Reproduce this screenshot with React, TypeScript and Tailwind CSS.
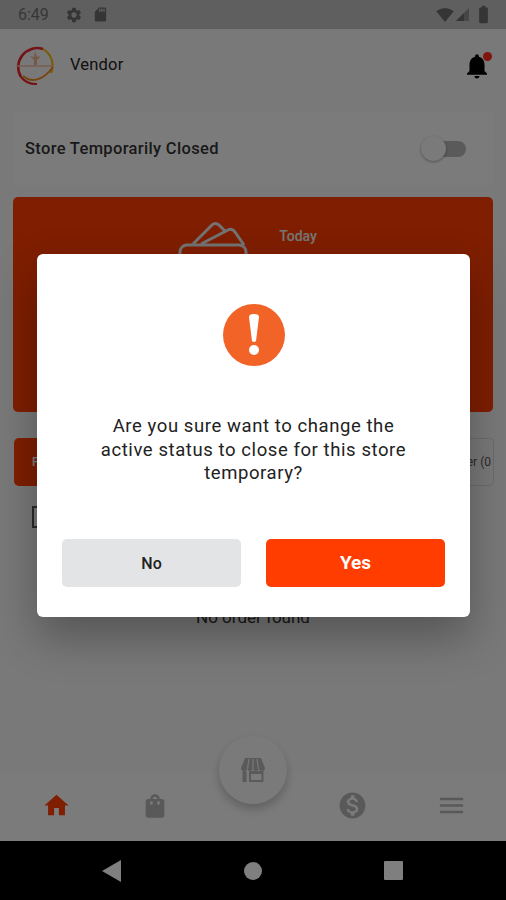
import React from "react";
import { MdHome, MdShoppingBag, MdMonetizationOn, MdMenu, MdNotifications, MdSettings, MdSdStorage, MdSignalWifi4Bar, MdBatteryStd } from "react-icons/md";

const font = { fontFamily: "Roboto, 'Liberation Sans', sans-serif" };

function Logo() {
  return (
    <svg width="44" height="44" viewBox="0 0 44 44" fill="none">
      <path d="M30 6 A19 19 0 0 0 8 34" stroke="#e8262a" strokeWidth="2.5" />
      <path d="M8 34 A19 19 0 0 0 24 41" stroke="#e8262a" strokeWidth="2" />
      <path d="M30 6 A19 19 0 0 1 38 30" stroke="#f0b400" strokeWidth="2" />
      <path d="M10 33 C18 40 30 38 40 24" stroke="#ef8a20" strokeWidth="2" />
      <path d="M3 23 H40" stroke="#f0b8a0" strokeWidth="1.5" />
      <path d="M22 8 l2 6 l4 -1 l-4 4 v5 h-3 v-5 l-4 -4 l4 1 z" fill="#eeb090" />
    </svg>
  );
}

function Wallet() {
  return (
    <svg width="72" height="90" viewBox="0 0 72 90" fill="none" stroke="#e6e6e6" strokeWidth="3" strokeLinejoin="round">
      <path d="M15 23 L34 4 Q37 1 41 4 L47 10" />
      <path d="M23 23 L50 9 Q54 7 57 11 L66 24" />
      <rect x="2" y="24" width="66" height="60" rx="7" />
    </svg>
  );
}

function StoreIcon() {
  return (
    <svg width="26" height="26" viewBox="0 0 26 26" fill="#b4b4b4">
      <path d="M5 1 H21 L25 11 Q25 14 22 14 Q19.5 14 19 12 Q18 14 16 14 Q14 14 13 12 Q12 14 10 14 Q8 14 7 12 Q6.5 14 4 14 Q1 14 1 11 Z" />
      <path d="M9 2 L7.5 12 M13 2 V12 M17 2 L18.5 12" stroke="#f1f1f1" strokeWidth="1.2" />
      <rect x="2.5" y="14" width="4" height="11" />
      <path d="M9 14 H23.5 V25 H9 V14 Z M11 17 V23 H21.5 V17 Z" fillRule="evenodd" />
    </svg>
  );
}

export default function App() {
  return (
    <div className="relative flex h-[900px] w-[506px] flex-col overflow-hidden bg-[#f3f3f3]" style={font}>
      <div className="flex h-[29px] shrink-0 items-center bg-[#bfbfbf] pl-[18px] pr-[12px] text-[#6e6e6e]">
        <span className="text-[16px] leading-none">6:49</span>
        <MdSettings size={18} className="ml-[16px] text-[#6a6a6a]" />
        <MdSdStorage size={17} className="ml-[9px] text-[#6a6a6a]" />
        <div className="ml-auto flex items-center gap-[1px] text-[#6a6a6a]">
          <MdSignalWifi4Bar size={18} />
          <svg width="15" height="15" viewBox="0 0 15 15"><path d="M1 14 L14 1 V14 Z" fill="#8f8f8f" /><path d="M1 14 L9 6 V14 Z" fill="#6a6a6a" /></svg>
          <MdBatteryStd size={21} className="ml-[2px]" />
        </div>
      </div>

      <div className="flex h-[71px] shrink-0 items-center pl-[13px] pr-[14px]">
        <Logo />
        <span className="ml-[13px] pt-[2px] text-[16.5px] tracking-[0.2px] text-[#222]">Vendor</span>
        <div className="relative ml-auto mt-[2px]">
          <MdNotifications size={30} className="text-black" />
          <span className="absolute right-[0px] top-[1px] h-[9px] w-[9px] rounded-full bg-[#ff2a1a]" />
        </div>
      </div>

      <div className="mx-[13px] mt-[12px] flex h-[73px] shrink-0 items-center justify-between rounded-[3px] bg-[#f7f7f7] pl-[12px] pr-[27px]">
        <span className="pt-[2px] text-[16.5px] font-medium tracking-[0.33px] text-[#333]">Store Temporarily Closed</span>
        <div className="relative h-[16px] w-[40px] rounded-full bg-[#b5b5b5]">
          <span className="absolute -left-[5px] -top-[5px] h-[25px] w-[25px] rounded-full bg-[#f5f5f5] shadow-[0_1px_3px_rgba(0,0,0,0.35)]" />
        </div>
      </div>

      <div className="mx-[13px] mt-[12px] flex h-[215px] shrink-0 justify-center gap-[29px] rounded-[5px] bg-[#ff3d00] pr-[11px] pt-[24px]">
        <Wallet />
        <span className="mt-[5px] text-[14px] font-medium text-[#eeeeee]">Today</span>
      </div>

      <div className="ml-[14px] mr-[12px] mt-[26px] flex h-[48px] shrink-0 justify-between gap-3 text-[12px]">
        <div className="flex w-[170px] items-center rounded-[5px] bg-[#ff3d00] pl-[18px] font-medium text-white">Pending</div>
        <div className="flex w-[170px] items-center justify-end overflow-hidden rounded-[4px] border border-[#d8d8d8] pr-[2px] text-[#555]">Delivered order (0</div>
      </div>

      <div className="ml-[32px] mt-[20px] h-[22px] w-[22px] shrink-0 border-2 border-[#555]" />

      <div className="mt-[77px] shrink-0 text-center text-[17px] text-[#333]">No order found</div>

      <div className="flex-1" />

      <nav className="relative grid h-[69px] shrink-0 grid-cols-5 items-center bg-[#f6f6f6] pb-[2px] pl-[7px] pr-[5px] text-[#b3b3b3]">
        <MdHome size={29} className="justify-self-center text-[#ff3d00]" />
        <MdShoppingBag size={28} className="justify-self-center" />
        <span />
        <MdMonetizationOn size={31} className="justify-self-center" />
        <MdMenu size={31} className="justify-self-center" />
        <div className="absolute left-[219px] top-[-36px] flex h-[68px] w-[68px] items-center justify-center rounded-full bg-[#f4f4f4] shadow-[0_5px_10px_rgba(0,0,0,0.22)]">
          <StoreIcon />
        </div>
      </nav>
      <div className="flex h-[59px] shrink-0 items-center bg-black">
        <svg className="ml-[102px]" width="19" height="22" viewBox="0 0 19 22"><path d="M0 11 L19 0 V22 Z" fill="#ffffff" /></svg>
        <span className="ml-[123px] h-[18px] w-[18px] rounded-full bg-white" />
        <span className="ml-[122px] h-[19px] w-[19px] rounded-[1px] bg-white" />
      </div>

      {/* modal backdrop */}
      <div className="absolute inset-0 bg-black/50">
        <div className="absolute left-[37px] top-[254px] flex h-[363px] w-[433px] flex-col items-center rounded-[6px] bg-white pt-[50px] shadow-[0_20px_45px_rgba(0,0,0,0.3)]">
          <div className="flex h-[62px] w-[62px] items-center justify-center rounded-full bg-[#f26327]">
            <svg width="14" height="42" viewBox="0 0 14 42" fill="white">
              <path d="M2 3 Q2 0 7 0 Q12 0 12 3 L9 27 Q7 29 5 27 Z" />
              <circle cx="7" cy="36" r="5" />
            </svg>
          </div>
          <p className="mt-[49px] w-[325px] text-center text-[18.5px] leading-[23.5px] tracking-[0.58px] text-[#222]">
            Are you sure want to change the active status to close for this store temporary?
          </p>
          <div className="mt-auto mb-[30px] flex w-full justify-between px-[25px]">
            <button className="flex h-[48px] w-[179px] items-center justify-center rounded-[5px] bg-[#e3e4e6] pt-[2px] text-[16px] font-medium text-[#222]">No</button>
            <button className="flex h-[48px] w-[179px] items-center justify-center rounded-[5px] bg-[#ff3d00] pt-[1px] text-[19px] font-bold text-white">Yes</button>
          </div>
        </div>
      </div>
    </div>
  );
}
